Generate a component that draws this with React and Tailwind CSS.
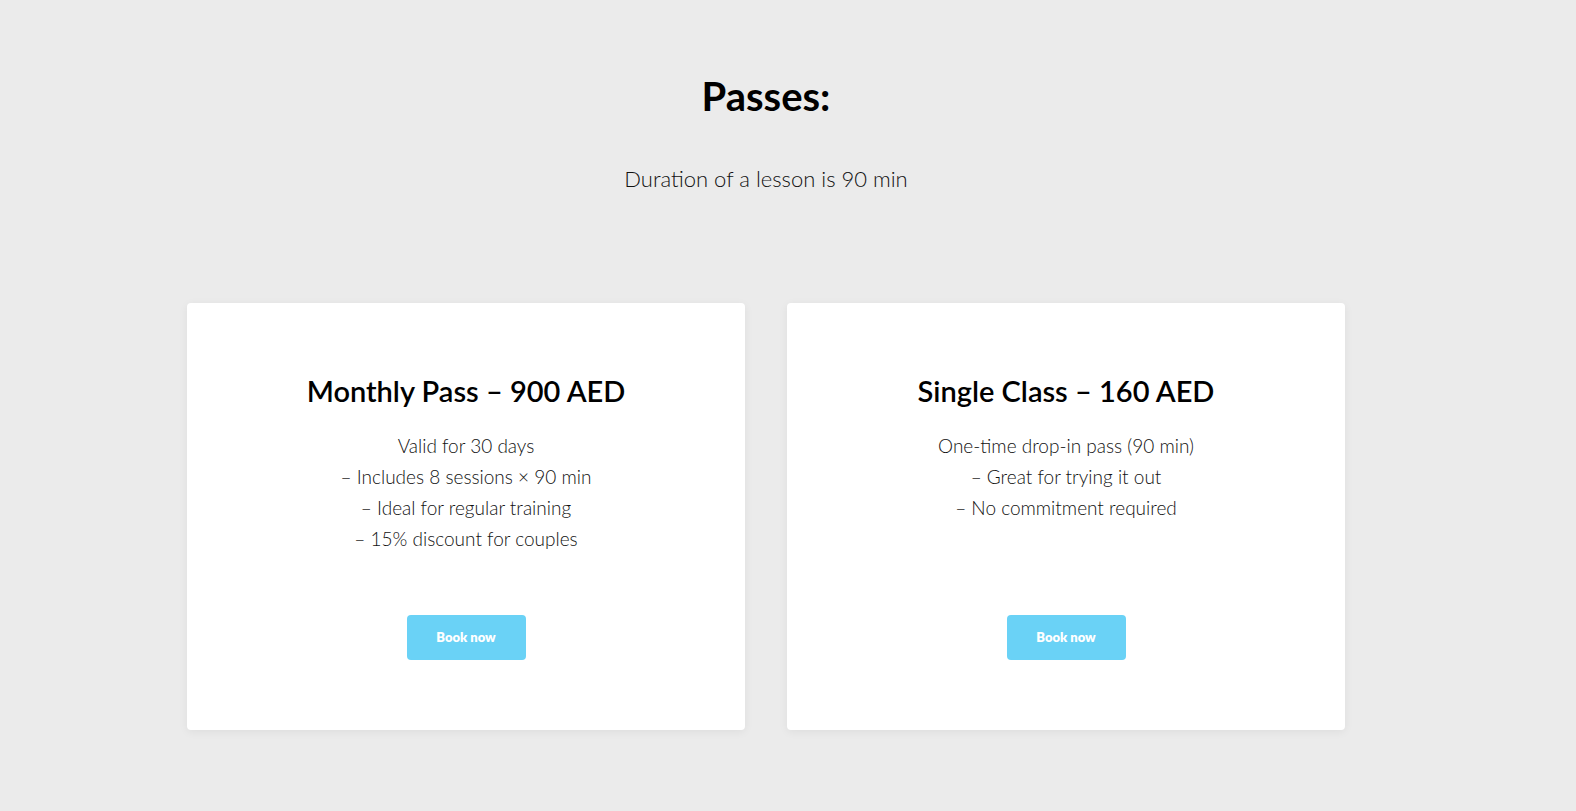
import React from "react";

const passes = [
  {
    title: "Monthly Pass – 900 AED",
    lines: [
      "Valid for 30 days",
      "– Includes 8 sessions × 90 min",
      "– Ideal for regular training",
      "– 15% discount for couples",
    ],
  },
  {
    title: "Single Class – 160 AED",
    lines: [
      "One-time drop-in pass (90 min)",
      "– Great for trying it out",
      "– No commitment required",
    ],
  },
];

const PassCard = ({ title, lines }) => (
  <div className="flex flex-col items-center bg-white rounded-[4px] shadow-[0_2px_10px_rgba(0,0,0,0.06)] pt-[70px] pb-[70px] px-8 text-center">
    <h3 className="text-[29px] leading-[36px] font-semibold text-black">
      {title}
    </h3>
    <div className="mt-[21px] mb-[61px] text-[19px] leading-[31px] font-light text-[#111]">
      {lines.map((line) => (
        <p key={line}>{line}</p>
      ))}
    </div>
    <button className="mt-auto w-[119px] h-[45px] rounded-[4px] bg-[#6ad2f6] text-white text-[13px] font-extrabold">
      Book now
    </button>
  </div>
);

export default function App() {
  return (
    <div
      className="min-h-screen bg-[#ebebeb] pr-[44px]"
      style={{ fontFamily: "Lato, 'Open Sans', sans-serif" }}
    >
      <div className="flex flex-col items-center pt-[72px]">
        <h1 className="text-[40px] leading-[48px] font-bold text-black">
          Passes:
        </h1>
        <p className="mt-[45px] text-[22px] leading-[28px] font-light text-[#111]">
          Duration of a lesson is 90 min
        </p>
        <div className="mt-[110px] grid grid-cols-2 gap-[42px] w-[1158px]">
          {passes.map((p) => (
            <PassCard key={p.title} title={p.title} lines={p.lines} />
          ))}
        </div>
      </div>
    </div>
  );
}
